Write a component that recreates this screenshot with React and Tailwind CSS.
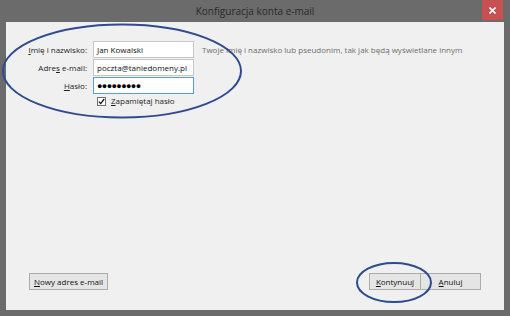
import React from 'react';

const font = "font-['Open_Sans','Noto_Sans',sans-serif]";

const Acc = ({ children }) => <span className="underline underline-offset-[1px]">{children}</span>;

const Field = ({ value, focused, password }) => (
    <div
        className={`h-[17px] w-[101px] bg-white border flex items-center px-[3px] ${
            focused ? 'border-[#569de5]' : 'border-[#c7c7c7]'
        }`}
    >
        <span className={password ? 'text-[9px] tracking-[-0.6px] text-black' : 'text-[8px] text-[#111] whitespace-nowrap'}>{value}</span>
    </div>
);

const Button = ({ children, className = '' }) => (
    <button className={`h-[17px] bg-[#e5e5e5] border border-[#acacac] text-[8px] text-[#111] flex items-center justify-center whitespace-nowrap ${className}`}>
        {children}
    </button>
);

const App = () => {
    return (
        <div className={`w-[510px] h-[316px] bg-[#6b6b6b] flex flex-col ${font}`}>
            {/* title bar */}
            <div className="h-[22px] flex items-start relative">
                <div className="flex-1 text-center text-[10px] text-[#2a2a2a] pt-[4px]">Konfiguracja konta e-mail</div>
                <div className="absolute right-[7px] top-0 w-[21px] h-[20px] bg-[#c75050] flex items-center justify-center">
                    <svg width="7" height="7" viewBox="0 0 7 7">
                        <path d="M0.5 0.5 L6.5 6.5 M6.5 0.5 L0.5 6.5" stroke="#fff" strokeWidth="1.6" />
                    </svg>
                </div>
            </div>

            {/* client area */}
            <div className="flex-1 mx-[6px] mb-[6px] bg-[#f0f0f0] relative flex flex-col">
                <div className="pt-[19px] pl-[10px] grid grid-cols-[71px_101px_auto] gap-x-[6px] gap-y-[1px] items-center">
                    <div className="text-right text-[8px] text-[#1e1e1e]"><Acc>I</Acc>mię i nazwisko:</div>
                    <Field value="Jan Kowalski" />
                    <div className="text-[8px] text-[#6d6d6d] pl-[2px] whitespace-nowrap">
                        Twoje imię i nazwisko lub pseudonim, tak jak będą wyświetlane innym
                    </div>

                    <div className="text-right text-[8px] text-[#1e1e1e]">Adre<Acc>s</Acc> e-mail:</div>
                    <Field value="poczta@taniedomeny.pl" />
                    <div />

                    <div className="text-right text-[8px] text-[#1e1e1e]"><Acc>H</Acc>asło:</div>
                    <Field value="●●●●●●●●●" focused password />
                    <div />

                    <div />
                    <div className="flex items-center gap-[5px] pl-[4px]">
                        <div className="w-[9px] h-[9px] bg-white border border-[#707070] flex items-center justify-center">
                            <svg width="7" height="7" viewBox="0 0 7 7">
                                <path d="M0.8 3.6 L2.7 5.6 L6.2 1" stroke="#111" strokeWidth="1.3" fill="none" />
                            </svg>
                        </div>
                        <span className="text-[8px] text-[#1e1e1e] whitespace-nowrap"><Acc>Z</Acc>apamiętaj hasło</span>
                    </div>
                    <div />
                </div>

                <div className="mt-auto pb-[20px] pl-[23px] pr-[23px] flex items-center">
                    <Button className="w-[79px]">
                        <span><Acc>N</Acc>owy adres e-mail</span>
                    </Button>
                    <div className="flex-1" />
                    <Button className="w-[52px]">
                        <span><Acc>K</Acc>ontynuuj</span>
                    </Button>
                    <Button className="w-[60px] border-l-0">
                        <span><Acc>A</Acc>nuluj</span>
                    </Button>
                </div>

                {/* annotation ellipses drawn over the dialog */}
                <svg className="absolute left-[-6px] top-[-22px] pointer-events-none" width="510" height="316">
                    <ellipse cx="122" cy="71" rx="119" ry="46.5" fill="none" stroke="#2f4b8f" strokeWidth="2" />
                    <ellipse cx="394" cy="282.5" rx="37" ry="19.5" fill="none" stroke="#2f4b8f" strokeWidth="2" />
                </svg>
            </div>
        </div>
    );
};

export default App;
